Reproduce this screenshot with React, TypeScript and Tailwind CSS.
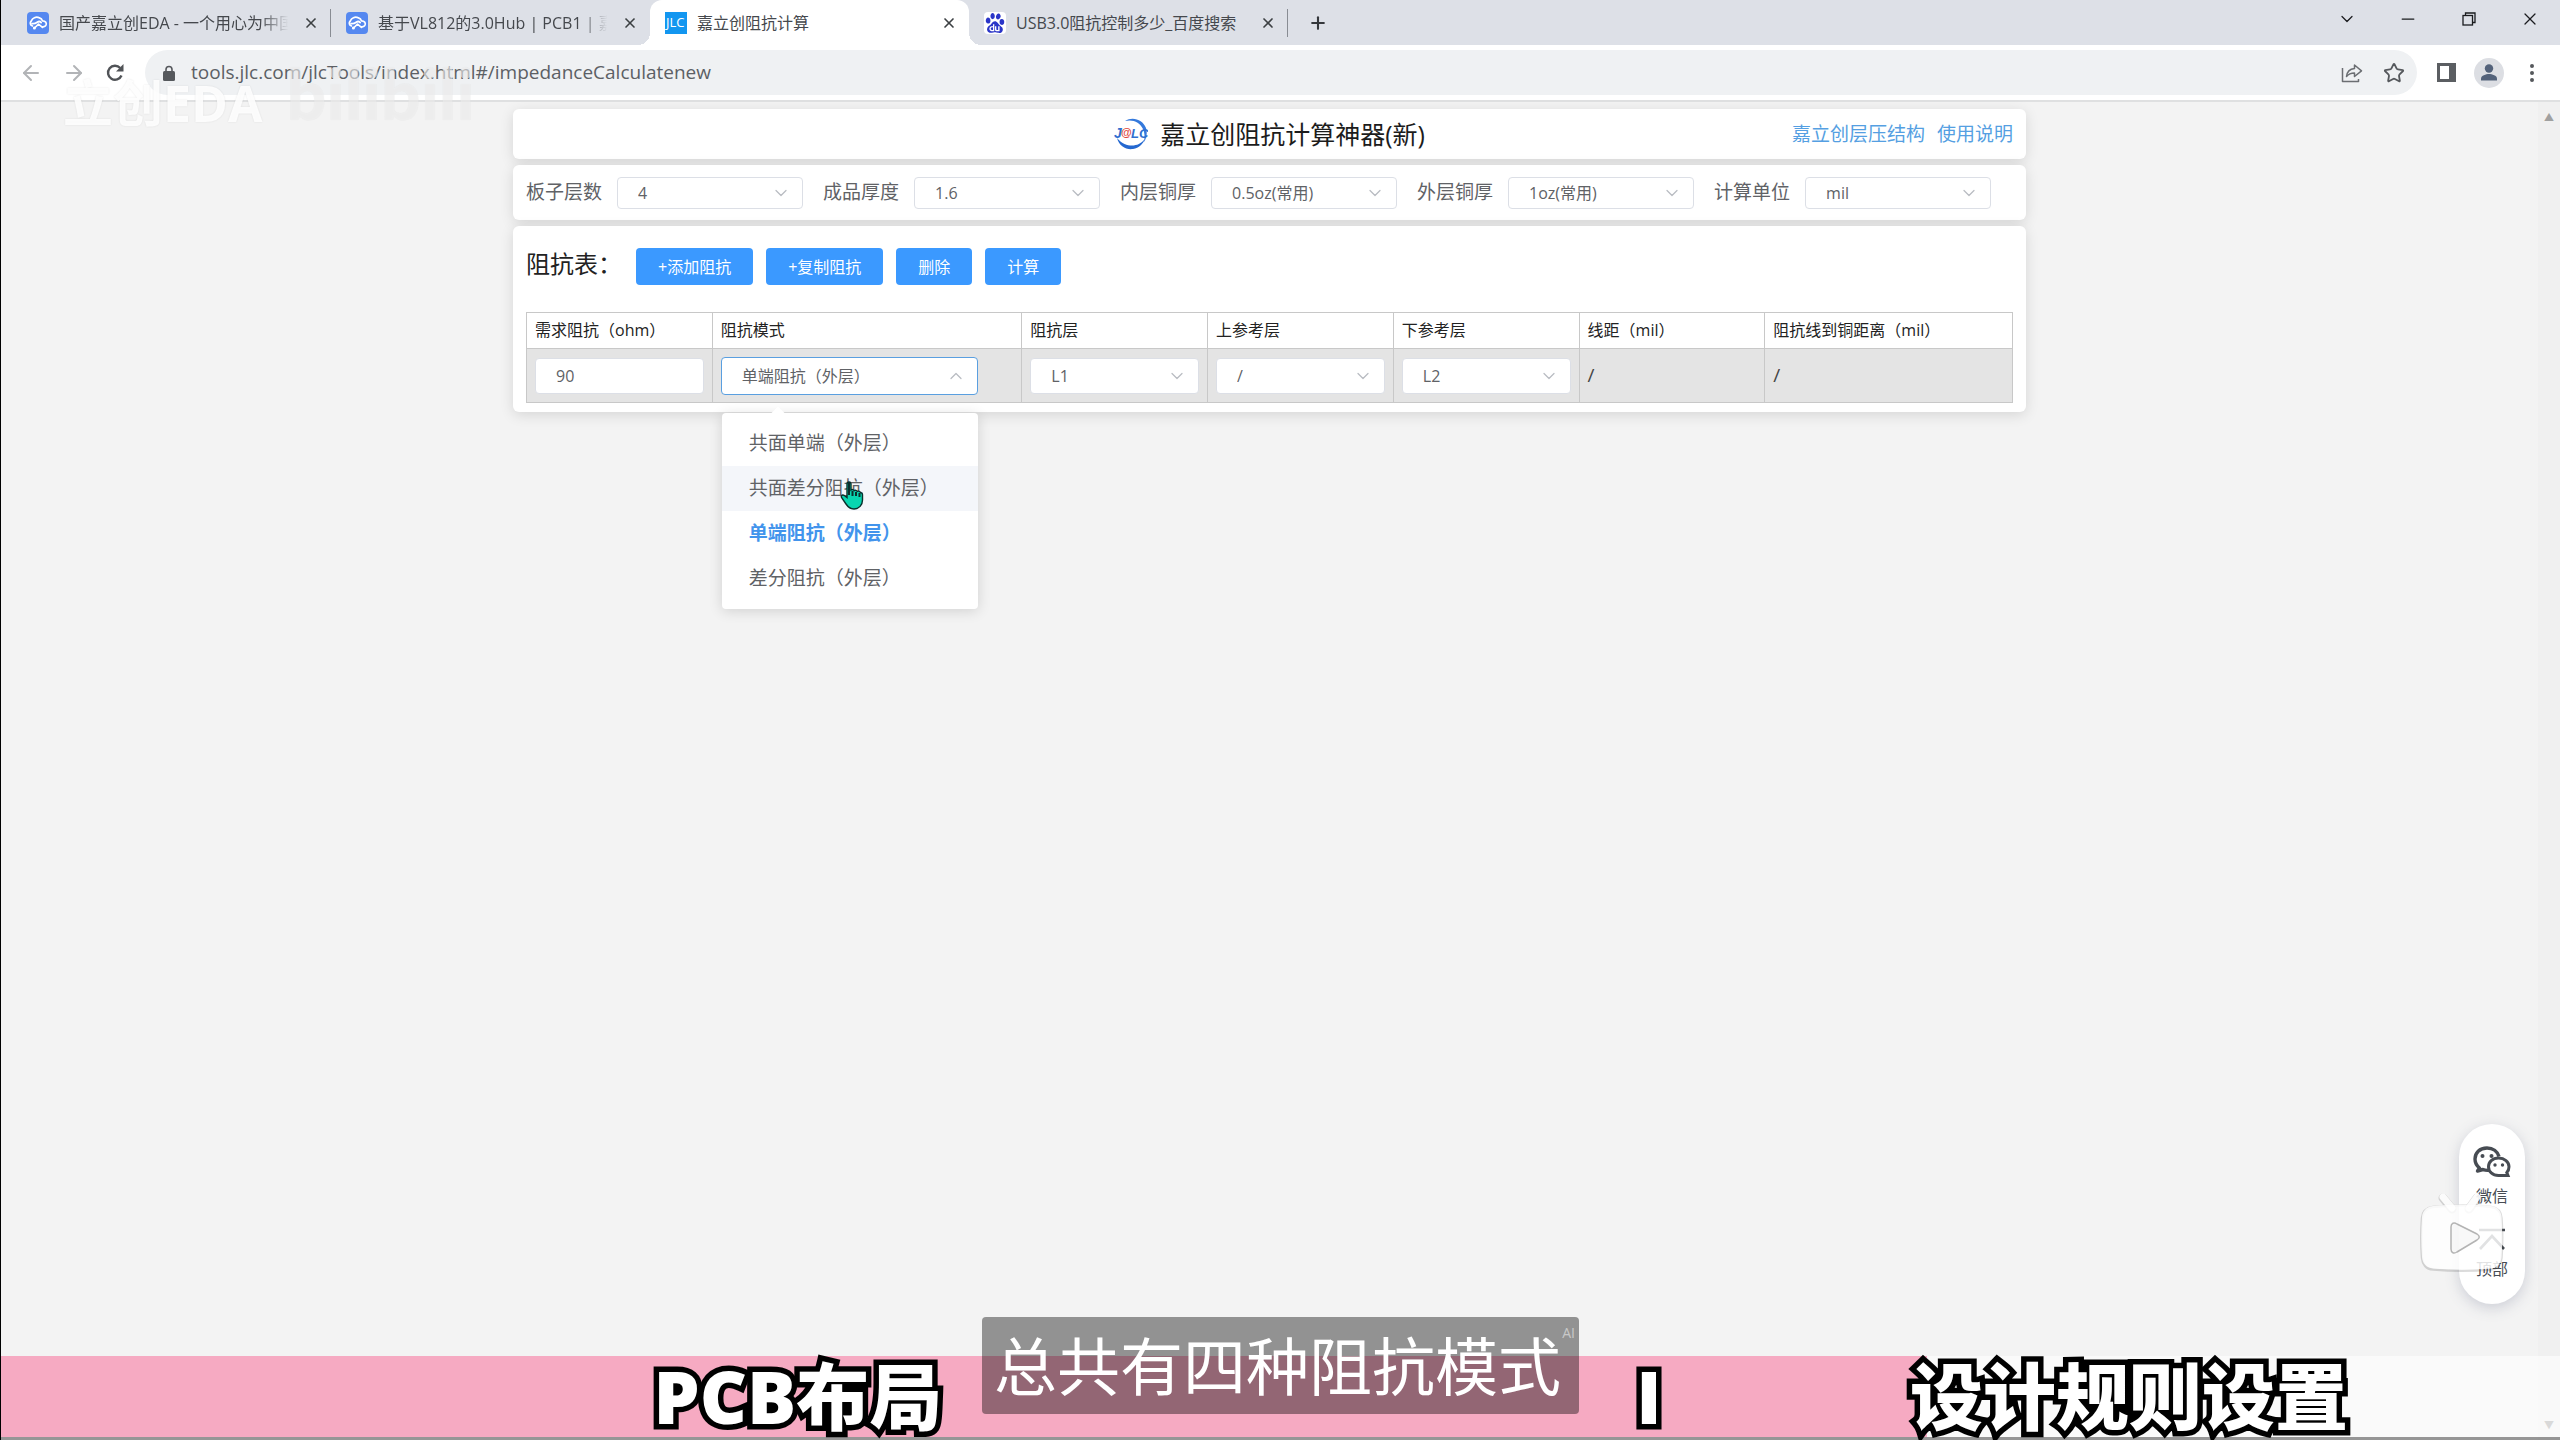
import { useState } from "react";
import type { ReactNode } from "react";
import {
  ArrowLeft,
  ArrowRight,
  ChevronDown,
  ChevronUp,
  EllipsisVertical,
  Minus,
  Plus,
  Star,
  X,
} from "lucide-react";
import { SiBaidu } from "react-icons/si";

const layerFilters = [
  { id: "layers", label: "板子层数", value: "4" },
  { id: "thickness", label: "成品厚度", value: "1.6" },
  { id: "inner", label: "内层铜厚", value: "0.5oz(常用)" },
  { id: "outer", label: "外层铜厚", value: "1oz(常用)" },
  { id: "unit", label: "计算单位", value: "mil" },
];

const columns = [
  "需求阻抗（ohm）",
  "阻抗模式",
  "阻抗层",
  "上参考层",
  "下参考层",
  "线距（mil）",
  "阻抗线到铜距离（mil）",
];

const modes = ["共面单端（外层）", "共面差分阻抗（外层）", "单端阻抗（外层）", "差分阻抗（外层）"];

const EdaIcon = () => (
  <svg viewBox="0 0 22 22" className="size-[22px] shrink-0">
    <rect width="22" height="22" rx="4" fill="#5588f0" />
    <g fill="none" stroke="#fff" strokeWidth="1.700" strokeLinecap="round" strokeLinejoin="round">
      <path d="M5.500 14C3 13.200 2.600 10.500 4.300 9 5.400 5.800 9 4.500 12 5.600c2.200.7 3.200 2 3.500 3.300 3 0 4.300 2 3.600 3.900-.6 1.500-2 2.100-3.600 2.100" />
      <path d="M5 11.600c2.500.4 4-.5 5.200-1.400 1.500-1 3-.8 4 .4M7.500 16l4-3.800 4 3.200" />
    </g>
    <circle cx="7.400" cy="16" r="1.500" fill="#fff" />
  </svg>
);

const JlcIcon = () => (
  <span className="flex h-[22px] w-[22px] shrink-0 items-center overflow-hidden bg-[#1296f0] pl-px text-[13px] text-white">
    JLC
  </span>
);

const BaiduIcon = () => (
  <span className="flex size-[22px] shrink-0 items-center justify-center rounded-sm bg-white">
    <SiBaidu className="size-5 text-[#2a35c8]" />
  </span>
);

const JlcLogo = () => (
  <svg viewBox="0 0 34 34" className="size-[34px]">
    <path d="M11 4C19-1 29 3 32 11c1.500 5 .6 10-2 14 .8-5 .8-9-1-13C26 5.500 19 2 11 4z" fill="#3479dc" />
    <path d="M3 21c2 8 9 12 16 11 6-1 10-5 12-10-4 4.500-8 6.500-13 6.500S8 27 3 21z" fill="#2468d0" />
    <text x="0" y="21" fontSize="14" fontWeight="700" fontStyle="italic" fill="#2f6fd0" fontFamily="Liberation Sans">
      J
    </text>
    <text x="7" y="19" fontSize="11" fontWeight="700" fill="#e0483c" fontFamily="Liberation Sans">
      @
    </text>
    <text x="17" y="21" fontSize="13" fontWeight="700" fontStyle="italic" fill="#2f6fd0" fontFamily="Liberation Sans">
      LC
    </text>
  </svg>
);

const ReloadIcon = () => (
  <svg viewBox="0 0 20 20" className="size-5">
    <path d="M16.500 12.500A7 7 0 1 1 15.200 5" fill="none" stroke="#505357" strokeWidth="2.400" />
    <path d="M18.500 1v7.500H11z" fill="#505357" />
  </svg>
);

const LockIcon = () => (
  <svg viewBox="0 0 12 16" className="h-4 w-3">
    <path d="M3 7V4.500a3 3 0 0 1 6 0V7" fill="none" stroke="#55585c" strokeWidth="1.600" />
    <rect y="6" width="12" height="10" rx="1.500" fill="#55585c" />
  </svg>
);

const ShareIcon = () => (
  <svg viewBox="0 0 22 20" className="h-5 w-[22px]">
    <g fill="none" stroke="#6b6e72" strokeWidth="1.500" strokeLinejoin="round">
      <path d="M1.500 5v13.500h16V16" />
      <path d="M5.500 13.500C6 8.500 9 6 13.500 5.500V2l7 5.800-7 5.700V10c-3.500 0-6 1-8 3.500z" />
    </g>
  </svg>
);

const RestoreIcon = () => (
  <svg viewBox="0 0 14 14" className="size-3.5">
    <g fill="none" stroke="#1a1c1f" strokeWidth="1.300">
      <rect x="1" y="3.500" width="9.500" height="9.500" />
      <path d="M3.500 3.500V1H13v9.500h-2.500" />
    </g>
  </svg>
);

const WechatIcon = () => (
  <svg viewBox="0 0 38 32" className="h-8 w-[38px]">
    <path
      d="M14 2C6.500 2 2 7 2 13c0 3.800 1.800 6.800 4.500 9L4.500 25l5.500-1.500c2.500 1 5 1 7 .6M14 2c6 0 10.500 3.500 12 8.500"
      fill="none"
      stroke="#474c53"
      strokeWidth="3.400"
      strokeLinejoin="round"
    />
    <path
      d="M25.500 12c-6 0-10 4-10 8.800s4 8.700 10 8.700H35l-1.200-3c1.500-1.500 2.200-3.500 2.200-5.700 0-4.800-4.500-8.800-10.500-8.800z"
      fill="#fff"
      stroke="#474c53"
      strokeWidth="3"
    />
    <g fill="#474c53">
      <circle cx="9.500" cy="10" r="2" />
      <circle cx="18.500" cy="10" r="2" />
      <circle cx="22" cy="19" r="1.700" />
      <circle cx="29.500" cy="19" r="1.700" />
    </g>
  </svg>
);

const TopIcon = () => (
  <svg viewBox="0 0 26 22" className="h-[22px] w-[26px]">
    <path d="M0 2h26M1 21L13 8l12 13" fill="none" stroke="#474c53" strokeWidth="2.600" />
  </svg>
);

const HandCursor = () => (
  <svg viewBox="0 0 24 30" className="h-[30px] w-6">
    <path
      d="M9 2c1.300 0 2 .8 2 2v6c1-.8 2.600-.5 3.200.6 1-.6 2.600-.2 3.100.8 1.200-.5 2.700 0 3.200 1.200 1.200 0 2 .9 2 2.200V20c0 5-3.500 9-8.500 9-4 0-6-2-8-5L1.500 17.500c-.8-1.500.8-3.200 2.500-2.200l3 2.200V4c0-1.200.7-2 2-2z"
      fill="#08d6b0"
      stroke="#0b2f2c"
      strokeWidth="1.400"
    />
    <path d="M9 2v13M12.500 11v5M16 12v4M19.500 13v4" stroke="#0b2f2c" strokeWidth="2" />
  </svg>
);

const PlayerBadge = () => (
  <svg viewBox="0 0 90 86" className="h-[86px] w-[90px]">
    <g fill="none" stroke="#000" strokeOpacity="0.140" strokeLinecap="round">
      <path d="M26 5l9 11M60 5l-8 11" strokeWidth="9" />
      <path
        d="M16 14c18-2 42-2 58 0 7 1 10 5 10.500 11 1 14 1 26 0 40-.5 6-4 11-10.500 11.500-18 1.500-40 1.500-58 0C9 76 5.500 71 5 65c-1-14-1-26 0-40 .5-6 4-10 11-11z"
        strokeWidth="2.500"
      />
    </g>
    <path d="M26 4l9 11M60 4l-8 11" stroke="#fff" strokeOpacity="0.900" strokeWidth="7" strokeLinecap="round" />
    <path
      d="M16 13c18-2 42-2 58 0 7 1 10 5 10.500 11 1 14 1 26 0 40-.5 6-4 11-10.500 11.500-18 1.500-40 1.500-58 0C9 75 5.500 70 5 64c-1-14-1-26 0-40 .5-6 4-10 11-11z"
      fill="#fff"
      fillOpacity="0.840"
    />
    <path
      d="M34 34v22c0 4 3 5 6 3l20-12c3-2 3-4 0-6L40 31c-3-2-6-1-6 3z"
      fill="#f4f4f4"
      fillOpacity="0.600"
      stroke="#b4b4b4"
      strokeWidth="1.500"
    />
  </svg>
);

type TabProps = { icon: ReactNode; title: string; active?: boolean; divider?: boolean; clipped?: boolean };

const BrowserTab = ({ icon, title, active, divider, clipped }: TabProps) => (
  <div
    className={
      "relative flex h-full w-[319px] items-center gap-2.5 pl-[15px] pr-3 " + (active ? "rounded-t-xl bg-white" : "")
    }
  >
    {active && (
      <>
        <span className="absolute bottom-0 right-full size-3 bg-[radial-gradient(circle_at_0_0,transparent_12px,white_12px)]" />
        <span className="absolute bottom-0 left-full size-3 bg-[radial-gradient(circle_at_100%_0,transparent_12px,white_12px)]" />
      </>
    )}
    {icon}
    <span
      className={
        "flex-1 overflow-hidden whitespace-nowrap text-base text-[#45484d] " +
        (clipped ? "[mask-image:linear-gradient(to_right,black_86%,transparent_98%)]" : "")
      }
    >
      {title}
    </span>
    <button aria-label={"关闭 " + title} className="flex w-4 justify-center">
      <X className="size-4 text-[#3c4043]" strokeWidth={2.5} />
    </button>
    {divider && <span className="absolute right-0 h-7 w-px bg-[#888c93]" />}
  </div>
);

type SelectProps = { id: string; label?: string; options: string[]; className: string };

const SelectBox = ({ id, label, options, className }: SelectProps) => (
  <div className="relative">
    <select
      id={id}
      aria-label={label}
      className={"w-full appearance-none rounded bg-white px-5 text-base text-[#606266] outline-none " + className}
    >
      {options.map((option) => (
        <option key={option}>{option}</option>
      ))}
    </select>
    <ChevronDown
      className="pointer-events-none absolute inset-y-0 right-3 my-auto size-5 text-[#b9bcc2]"
      strokeWidth={1.5}
    />
  </div>
);

const ActionButton = ({ children }: { children: ReactNode }) => (
  <button className="h-[37px] rounded bg-[#3b99ff] px-[22px] text-base text-white">{children}</button>
);

const BrowserChrome = () => (
  <header>
    <div className="flex h-[45px] items-center bg-[#dde0e7] pl-[11px]">
      <BrowserTab icon={<EdaIcon />} title="国产嘉立创EDA - 一个用心为中国" divider clipped />
      <BrowserTab icon={<EdaIcon />} title="基于VL812的3.0Hub | PCB1 | 嘉立" clipped />
      <BrowserTab icon={<JlcIcon />} title="嘉立创阻抗计算" active />
      <BrowserTab icon={<BaiduIcon />} title="USB3.0阻抗控制多少_百度搜索" divider />
      <button aria-label="新标签页" className="ml-5">
        <Plus className="size-5 text-[#34373b]" strokeWidth={2.5} />
      </button>
      <div className="mb-2 ml-auto flex items-center text-[#1a1c1f]">
        <button aria-label="搜索标签页" className="flex w-[61px] justify-center">
          <ChevronDown className="size-5" strokeWidth={1.5} />
        </button>
        <button aria-label="最小化" className="flex w-[61px] justify-center">
          <Minus className="size-5" strokeWidth={1.5} />
        </button>
        <button aria-label="还原" className="flex w-[61px] justify-center">
          <RestoreIcon />
        </button>
        <button aria-label="关闭" className="flex w-[61px] justify-center">
          <X className="size-5" strokeWidth={1.5} />
        </button>
      </div>
    </div>
    <div className="flex h-[57px] items-center border-b-2 border-[#dfe0e1] bg-white pl-[18px] pr-4">
      <button aria-label="后退" className="w-[43px]">
        <ArrowLeft className="size-6 text-[#b2b4b7]" />
      </button>
      <button aria-label="前进" className="w-[43px]">
        <ArrowRight className="size-6 text-[#b2b4b7]" />
      </button>
      <button aria-label="刷新" className="w-10">
        <ReloadIcon />
      </button>
      <div className="flex h-[45px] flex-1 items-center rounded-full bg-[#eff1f3] pl-[18px] pr-3">
        <LockIcon />
        <input
          aria-label="地址"
          defaultValue="tools.jlc.com/jlcTools/index.html#/impedanceCalculatenew"
          className="ml-4 flex-1 bg-transparent text-[19px] text-[#5c6065] outline-none"
        />
        <button aria-label="分享" className="mr-5">
          <ShareIcon />
        </button>
        <button aria-label="收藏">
          <Star className="size-[22px] text-[#55585c]" />
        </button>
      </div>
      <button aria-label="侧边栏" className="ml-5 flex h-[19px] w-[19px] border-[3px] border-[#5b5e62]">
        <span className="ml-auto h-full w-1 bg-[#5b5e62]" />
      </button>
      <button aria-label="用户" className="ml-[18px]">
        <svg viewBox="0 0 30 30" className="size-[30px]">
          <circle cx="15" cy="15" r="15" fill="#dcdee3" />
          <circle cx="15" cy="10.500" r="4.200" fill="#53627a" />
          <path d="M7 22.500v-2c0-3 5-4.500 8-4.500s8 1.500 8 4.500v2z" fill="#53627a" />
        </svg>
      </button>
      <button aria-label="更多" className="ml-4">
        <EllipsisVertical className="size-6 text-[#55585c]" />
      </button>
    </div>
  </header>
);

const FilterCard = () => (
  <section className="flex h-[55px] items-center gap-5 rounded-md bg-white px-[13px] shadow-[0_3px_14px_rgba(0,0,0,0.12)]">
    {layerFilters.map((filter) => (
      <div key={filter.id} className="flex items-center gap-[15px]">
        <label htmlFor={filter.id} className="whitespace-nowrap text-[19px] text-[#606266]">
          {filter.label}
        </label>
        <div className="w-[186px]">
          <SelectBox id={filter.id} options={[filter.value]} className="h-8 border border-[#dcdfe6]" />
        </div>
      </div>
    ))}
  </section>
);

const ModeCell = () => {
  const [mode, setMode] = useState(modes[2]);
  const [hovered, setHovered] = useState(modes[1]);

  return (
    <div className="relative w-[257px]">
      <select
        aria-label="阻抗模式"
        value={mode}
        onChange={(e) => setMode(e.target.value)}
        className="h-[38px] w-full appearance-none rounded border border-[#5a9fe0] bg-white px-5 text-base text-[#606266] outline-none"
      >
        {modes.map((item) => (
          <option key={item}>{item}</option>
        ))}
      </select>
      <ChevronUp
        className="pointer-events-none absolute inset-y-0 right-3 my-auto size-5 text-[#b9bcc2]"
        strokeWidth={1.5}
      />
      <div
        role="listbox"
        className="absolute left-px top-full z-10 mt-[18px] w-[256px] rounded-sm bg-white py-2 shadow-[0_2px_14px_rgba(0,0,0,0.14)]"
      >
        <span className="absolute -top-1 left-[50px] size-3 rotate-45 bg-white" />
        {modes.map((item) => (
          <button
            key={item}
            role="option"
            aria-selected={item === mode}
            onClick={() => setMode(item)}
            onMouseEnter={() => setHovered(item)}
            className={
              "relative block h-[45px] w-full whitespace-nowrap px-[27px] text-left text-[19px] " +
              (item === mode ? "font-bold text-[#4294ec] " : "text-[#606266] ") +
              (item === hovered ? "bg-[#f4f6fa]" : "")
            }
          >
            {item}
          </button>
        ))}
        <span className="pointer-events-none absolute left-[118px] top-[67px]">
          <HandCursor />
        </span>
      </div>
    </div>
  );
};

const ImpedanceCard = () => (
  <section className="rounded-md bg-white px-[13px] pb-[9px] pt-[22px] shadow-[0_3px_14px_rgba(0,0,0,0.12)]">
    <div className="mb-[27px] flex h-[37px] items-start gap-[13px]">
      <h2 className="w-[97px] whitespace-nowrap text-2xl leading-8 text-[#222]">阻抗表：</h2>
      <ActionButton>+添加阻抗</ActionButton>
      <ActionButton>+复制阻抗</ActionButton>
      <ActionButton>删除</ActionButton>
      <ActionButton>计算</ActionButton>
    </div>
    <table className="w-full table-fixed border-collapse text-left">
      <colgroup>
        <col className="w-1/8" />
        <col className="w-5/24" />
        <col className="w-1/8" />
        <col className="w-1/8" />
        <col className="w-1/8" />
        <col className="w-1/8" />
        <col />
      </colgroup>
      <thead>
        <tr className="h-9">
          {columns.map((column) => (
            <th
              key={column}
              className="whitespace-nowrap border border-[#c8c8c8] px-2 pb-0.5 text-base font-normal text-[#222]"
            >
              {column}
            </th>
          ))}
        </tr>
      </thead>
      <tbody>
        <tr className="h-[54px] bg-[#e4e4e4] [&>td]:border [&>td]:border-[#c8c8c8] [&>td]:px-2">
          <td>
            <input
              aria-label="需求阻抗"
              defaultValue="90"
              className="h-9 w-full rounded border border-[#dcdfe6] bg-white px-5 text-base text-[#606266] outline-none"
            />
          </td>
          <td>
            <ModeCell />
          </td>
          <td>
            <SelectBox id="layer" label="阻抗层" options={["L1"]} className="h-9 border border-[#dcdfe6]" />
          </td>
          <td>
            <SelectBox id="upper" label="上参考层" options={["/"]} className="h-9 border border-[#dcdfe6]" />
          </td>
          <td>
            <SelectBox id="lower" label="下参考层" options={["L2"]} className="h-9 border border-[#dcdfe6]" />
          </td>
          <td className="text-[19px] text-[#444]">/</td>
          <td className="text-[19px] text-[#444]">/</td>
        </tr>
      </tbody>
    </table>
  </section>
);

// translucent brand text over the top left corner
const Watermark = () => (
  <div className="pointer-events-none absolute left-[62px] top-12 flex h-20 items-end gap-6 whitespace-nowrap leading-none">
    <span className="text-[50px] font-bold text-white/90 [text-shadow:0_0_2px_rgba(0,0,0,0.1)]">立创EDA</span>
    <span className="font-[Lato] text-[70px] font-black text-[#f3f3f3]/60 [text-shadow:0_0_1px_rgba(0,0,0,0.06)]">
      bilibili
    </span>
  </div>
);

const FloatingTools = () => (
  <aside className="absolute right-[35px] top-[1124px]">
    <div className="flex h-[180px] w-[66px] flex-col items-center rounded-full bg-white pt-[22px] text-base text-[#474c53] shadow-[0_4px_14px_rgba(90,100,130,0.25)]">
      <WechatIcon />
      <span className="mt-1.5">微信</span>
      <button className="mt-5 flex flex-col items-center gap-[7px]">
        <TopIcon />
        顶部
      </button>
    </div>
    <div className="pointer-events-none absolute -left-[42px] top-[69px]">
      <PlayerBadge />
    </div>
  </aside>
);

const outlined =
  "absolute top-0 whitespace-nowrap text-[73px] font-black leading-[80px] text-white [-webkit-text-stroke:11px_black] [paint-order:stroke_fill] [stroke-linejoin:round]";

// chapter strip: the pink part is what has been played
const ChapterBar = () => (
  <div className="absolute inset-x-0 bottom-0 h-[84px] border-b-[3px] border-black/40 bg-white/60">
    <div className="h-full w-[75.25%] bg-[#f6aac2]" />
    <span className={outlined + " left-[25.500%]"}>PCB布局</span>
    <span className={outlined + " left-[63.900%]"}>I</span>
    <span className={outlined + " left-[74.600%]"}>设计规则设置</span>
  </div>
);

const Subtitle = () => (
  <div className="absolute inset-x-0 bottom-[26px] flex justify-center">
    <p className="relative rounded bg-black/40 pl-3 pr-[18px] text-[63px] leading-[97px] text-white">
      总共有四种阻抗模式
      <span className="absolute right-1 top-2 text-sm leading-4 text-white/50">AI</span>
    </p>
  </div>
);

const App = () => {
  return (
    <div className="relative flex min-h-screen flex-col overflow-hidden border-l border-black bg-[#f3f3f3] font-['Open_Sans','Noto_Sans_CJK_SC',sans-serif]">
      <BrowserChrome />
      <div className="flex flex-1">
        <main className="flex-1">
          <div className="mx-auto flex w-3/5 max-w-[1513px] flex-col gap-1.5 pt-[7px]">
            <section className="grid h-[50px] grid-cols-[1fr_auto_1fr] items-center rounded-md bg-white px-[13px] shadow-[0_3px_14px_rgba(0,0,0,0.12)]">
              <span />
              <h1 className="flex items-center gap-3 text-[25px] leading-8 text-[#1c1c1c]">
                <JlcLogo />
                嘉立创阻抗计算神器(新)
              </h1>
              <nav className="flex justify-end gap-3 text-[19px] text-[#559fe2]">
                <a href="#structure">嘉立创层压结构</a>
                <a href="#help">使用说明</a>
              </nav>
            </section>
            <FilterCard />
            <ImpedanceCard />
          </div>
        </main>
        <div className="flex w-[22px] flex-col items-center justify-between bg-[#f0f0f0] py-2.5 text-[10px] leading-none text-[#a0a0a0]">
          <span>▲</span>
          <span>▼</span>
        </div>
      </div>
      <FloatingTools />
      <ChapterBar />
      <Subtitle />
      <Watermark />
    </div>
  );
};

export default App;
